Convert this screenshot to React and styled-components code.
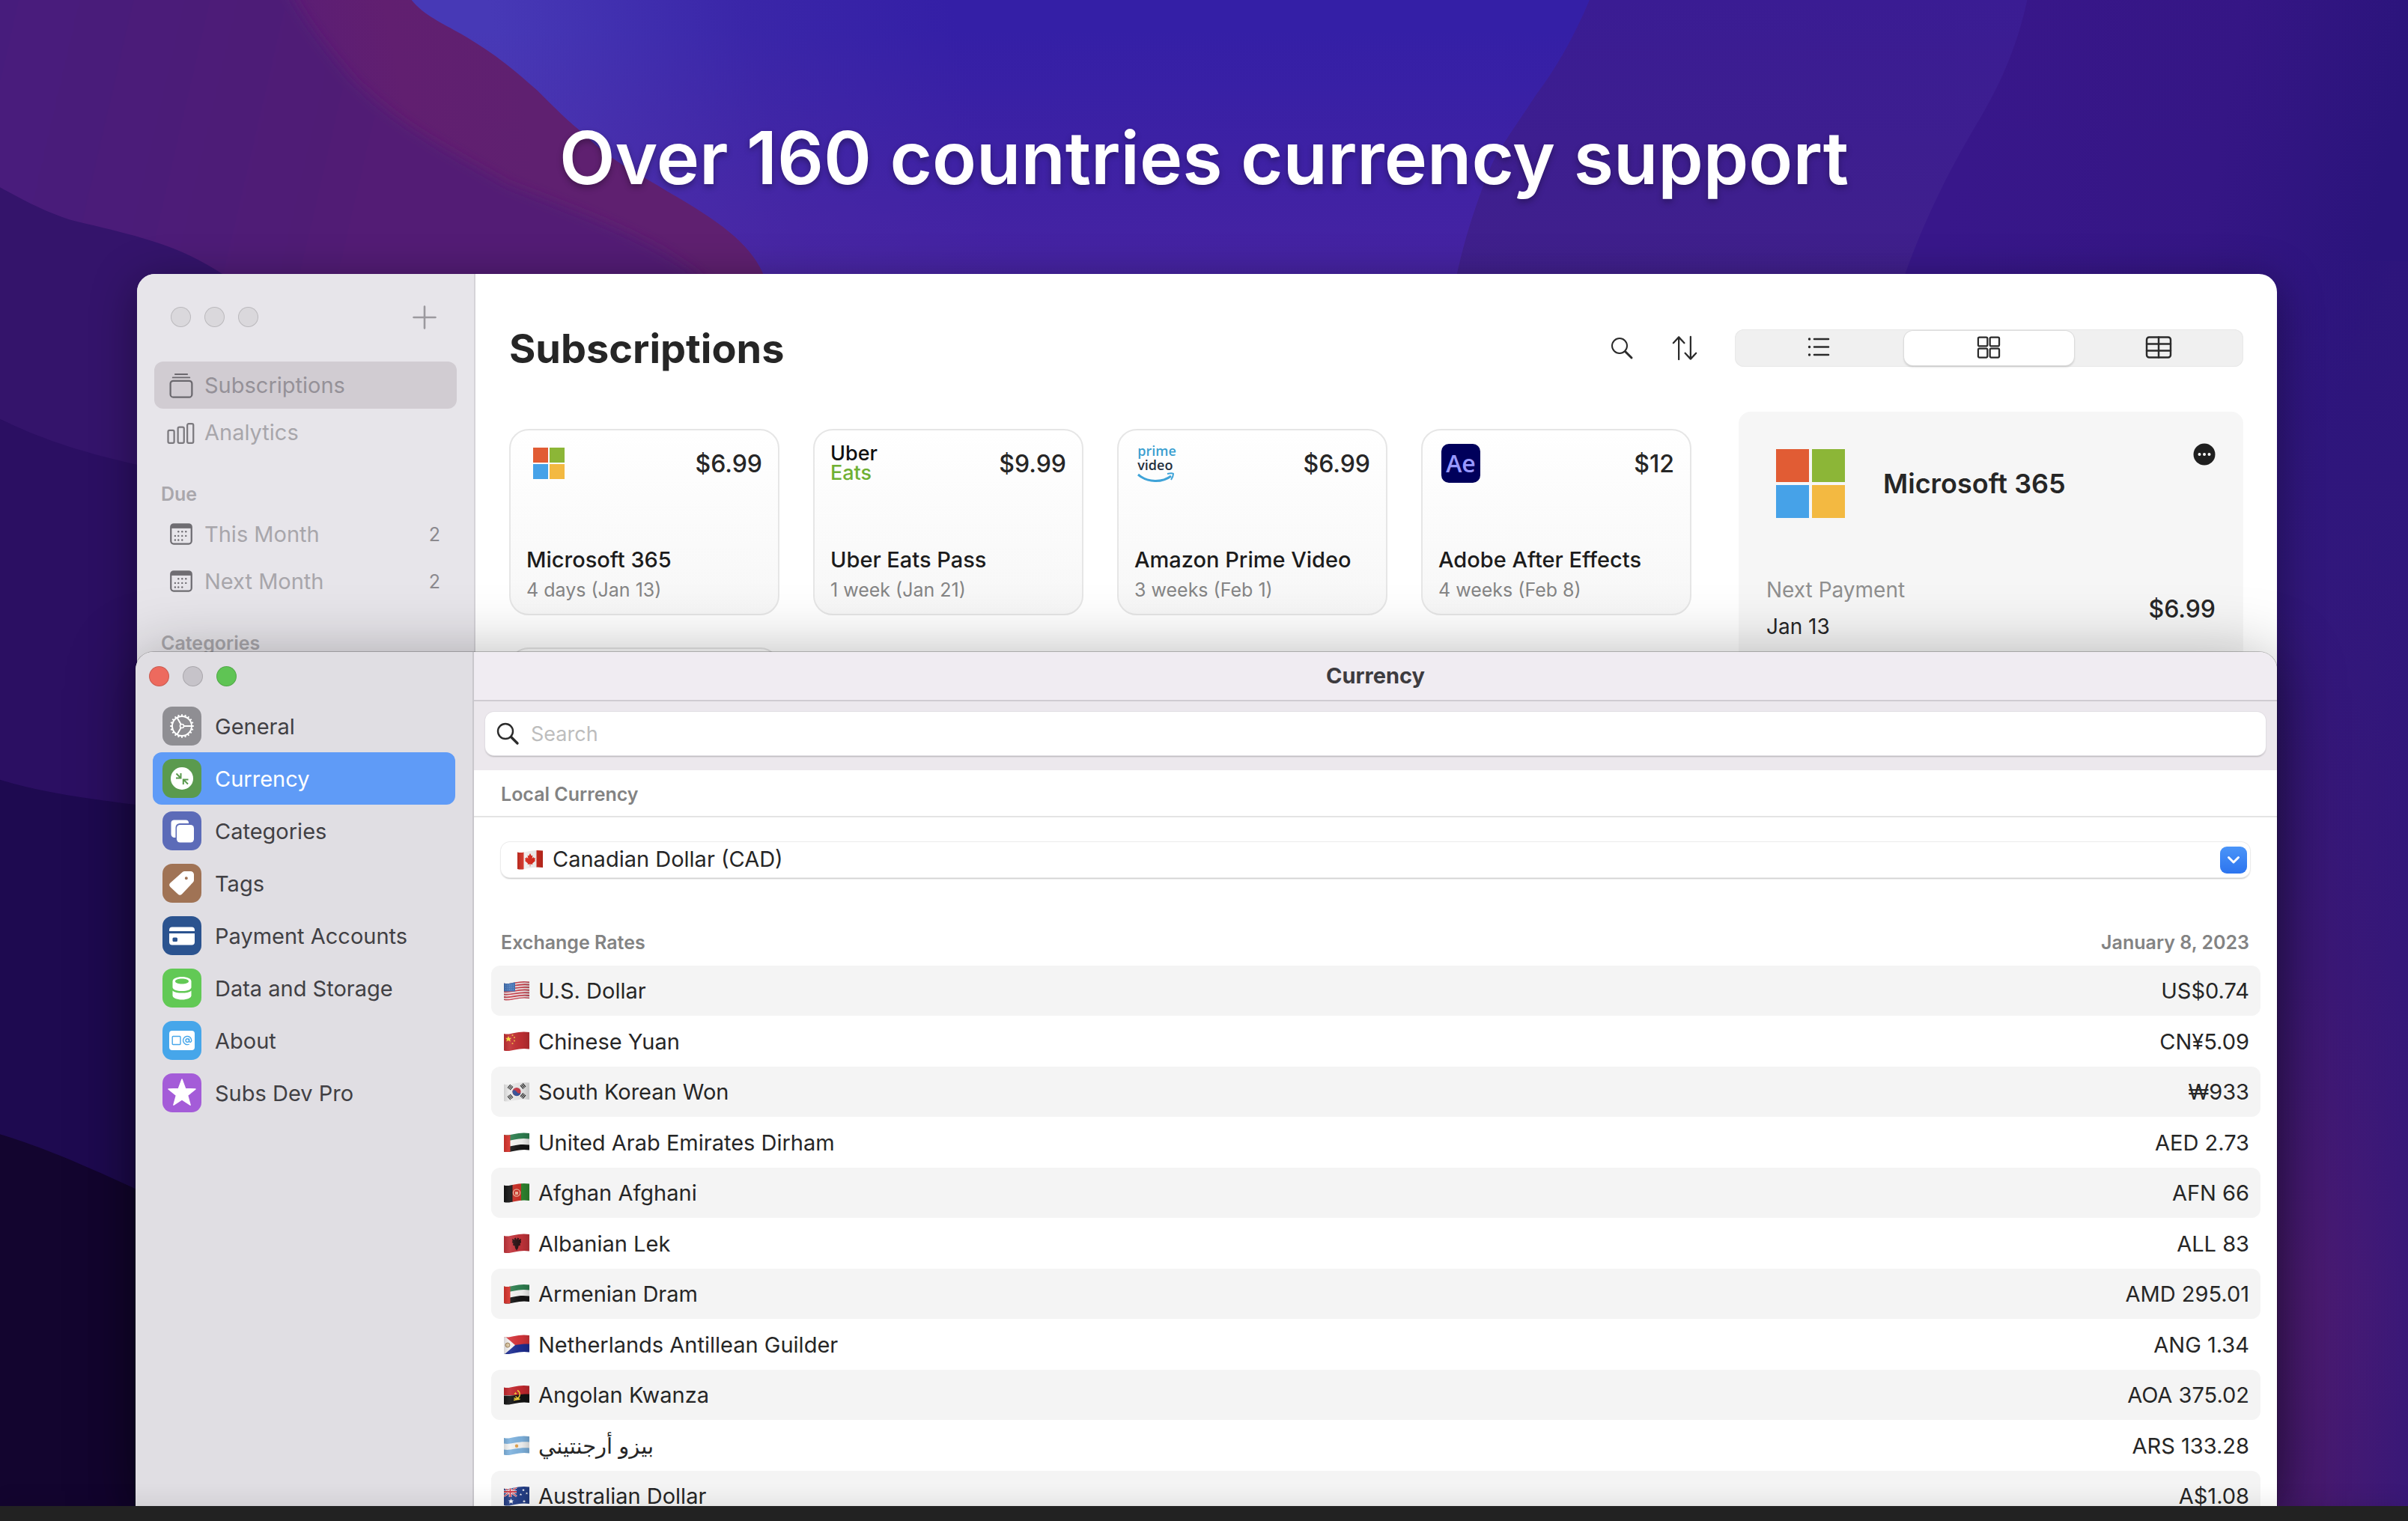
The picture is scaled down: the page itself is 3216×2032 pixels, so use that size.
import React from "react";
import styled, { createGlobalStyle, css } from "styled-components";

const GlobalStyle = createGlobalStyle`
  *, *::before, *::after { box-sizing: border-box; }
  html, body { margin: 0; height: 100%; }
  body {
    font-family: Inter, "DejaVu Sans", "Liberation Sans", sans-serif;
    font-size: 29px;
    color: #262626;
    background: #1c0850;
  }
  #root { height: 100%; }
  h1, h2, h3, p, ul { margin: 0; padding: 0; font-weight: inherit; font-size: inherit; }
  ul { list-style: none; }
  button, input, select { font: inherit; color: inherit; }
  svg { display: block; flex: none; }
`;

/* ---------- page ---------- */

const Page = styled.div`
  position: relative;
  isolation: isolate;
  height: 100vh;
  min-height: 1200px;
  overflow: hidden;
  display: grid;
  grid-template-rows: 366px minmax(0, 1fr) 20px;
`;

const Wallpaper = styled.svg`
  position: absolute;
  inset: 0;
  z-index: -1;
  width: 100%;
  height: 100%;
`;

const Headline = styled.h1`
  padding-top: 147px;
  line-height: 128px;
  font-size: 97px;
  font-weight: 600;
  text-align: center;
  color: #fff;
  text-shadow: 0 4px 8px rgba(0, 0, 0, 0.3);
`;

const Desktop = styled.main`
  display: grid;
  grid-template: minmax(0, 1fr) / minmax(0, 1fr);
  padding: 0 175px 0 181px;
`;

const Ledge = styled.footer`
  position: relative;
  background: #222;
  box-shadow: 0 -2px 32px rgba(0, 0, 0, 0.12);
`;

const windowFrame = css`
  grid-area: 1 / 1;
  display: grid;
  grid-template-columns: 452px minmax(0, 1fr);
  overflow: hidden;
  border-radius: 24px 24px 0 0;
`;

const BackWindow = styled.section`
  ${windowFrame}
  margin-left: 2px;
  background: #fff;
  box-shadow: 0 12px 60px rgba(0, 0, 0, 0.4);
`;

const FrontWindow = styled.section`
  ${windowFrame}
  margin-top: 505px;
  position: relative;
  background: #fff;
  box-shadow: 0 0 0 1px rgba(0, 0, 0, 0.22), 0 10px 90px rgba(0, 0, 0, 0.34);
`;

const Sidebar = styled.aside`
  background: ${(p) => (p.$dim ? "#e7e5ea" : "#e0dee3")};
  border-right: 2px solid ${(p) => (p.$dim ? "#d5d3d8" : "#c9c7cc")};
  padding: 0 23px;
`;

const SidebarTop = styled.div`
  display: flex;
  align-items: center;
  justify-content: space-between;
  height: ${(p) => (p.$tall ? "117px" : "64px")};
  padding: ${(p) => (p.$tall ? "0 27px 2px 22px" : "0")};
  margin-left: ${(p) => (p.$tall ? "0" : "-5px")};
`;

const Lights = styled.div`
  display: flex;
  gap: 18px;
`;

const Light = styled.button`
  width: 27px;
  height: 27px;
  padding: 0;
  border-radius: 50%;
  border: 1px solid rgba(0, 0, 0, 0.14);
  background: ${(p) => p.$color};
`;

const BareButton = styled.button`
  display: grid;
  place-items: center;
  padding: 0;
  border: 0;
  background: none;
`;

/* ---------- back window ---------- */

const NavItem = styled.a`
  display: flex;
  align-items: center;
  gap: 11px;
  height: 63px;
  padding: 0 22px 0 16px;
  border-radius: 12px;
  text-decoration: none;
  color: ${(p) => (p.$on ? "#959198" : "#a8a6ab")};
  background: ${(p) => (p.$on ? "#d1ccd2" : "transparent")};
`;

const NavLabel = styled.span`
  flex: 1;
`;

const NavCount = styled.span`
  font-size: 25px;
  color: #8b898e;
`;

const NavHeading = styled.h2`
  padding: 30px 9px 0;
  line-height: 43px;
  font-size: 25px;
  font-weight: 600;
  color: #a9a7ac;
`;

const Library = styled.div`
  padding: 64px 45px 0;
`;

const LibraryBar = styled.header`
  display: flex;
  align-items: center;
  height: 70px;
`;

const LibraryTitle = styled.h2`
  flex: 1;
  font-size: 54px;
  font-weight: 700;
`;

const Tools = styled.div`
  display: flex;
  gap: 50px;
  margin-right: 49px;
`;

const Segments = styled.div`
  display: grid;
  grid-template-columns: repeat(3, 1fr);
  width: 679px;
  height: 50px;
  padding: 2px 0;
  border-radius: 12px;
  background: #f0f0f0;
  box-shadow: inset 0 0 0 1px #e8e8e8;
`;

const Segment = styled.button`
  display: grid;
  place-items: center;
  padding: 0 0 2px;
  border: 0;
  border-radius: 12px;
  background: ${(p) => (p.$on ? "#fff" : "transparent")};
  box-shadow: ${(p) => (p.$on ? "0 0 0 1px #dcdcdc, 0 2px 3px rgba(0,0,0,.2)" : "none")};
`;

const LibraryBody = styled.div`
  display: grid;
  grid-template-columns: minmax(0, 1fr) 674px;
  gap: 63px;
  margin-top: 50px;
`;

const Cards = styled.ul`
  display: grid;
  grid-template-columns: repeat(4, minmax(0, 1fr));
  grid-auto-rows: 249px;
  gap: 43px 45px;
  padding-top: 23px;
`;

const Card = styled.li`
  display: flex;
  flex-direction: column;
  justify-content: space-between;
  padding: 13px 21px;
  border: 2px solid #e6e6e6;
  border-radius: 26px;
  background: linear-gradient(#fff, #f7f7f7);
`;

const CardTop = styled.div`
  display: flex;
  align-items: center;
  justify-content: space-between;
`;

const LogoSlot = styled.div`
  display: grid;
  place-items: center;
  width: 60px;
  height: 62px;
`;

const Price = styled.span`
  font-size: 32px;
  font-weight: 500;
`;

const CardName = styled.h3`
  line-height: 42px;
  font-weight: 500;
  color: #1c1c1c;
`;

const CardDue = styled.p`
  line-height: 38px;
  font-size: 25px;
  color: #858585;
`;

const Stack = styled.div`
  display: grid;
  justify-items: start;
  line-height: ${(p) => p.$line};
  font-size: ${(p) => p.$size};
  font-family: ${(p) => p.$face};
`;

const Tint = styled.span`
  color: ${(p) => p.$color};
  font-weight: ${(p) => p.$weight};
`;

const AeTile = styled.span`
  display: grid;
  place-items: center;
  width: 52px;
  height: 52px;
  border-radius: 10px;
  background: #00005b;
  color: #9999ff;
  font-family: "Open Sans", Inter, sans-serif;
  font-size: 32px;
  line-height: 40px;
  font-weight: 600;
`;

const Detail = styled.article`
  height: 480px;
  padding: 42px 37px;
  border-radius: 16px;
  background: #f6f6f6;
`;

const DetailTop = styled.header`
  display: flex;
  align-items: center;
  gap: 51px;
  height: 107px;
  padding-left: 13px;
`;

const DetailName = styled.h3`
  flex: 1;
  font-size: 36px;
  font-weight: 600;
`;

const MoreButton = styled(BareButton)`
  align-self: flex-start;
`;

const Payment = styled.div`
  display: flex;
  align-items: center;
  justify-content: space-between;
  margin-top: 65px;
`;

const PaymentTerm = styled.p`
  line-height: 49px;
  font-size: 28px;
  color: ${(p) => (p.$muted ? "#8f8f8f" : "#262626")};
`;

/* ---------- front window ---------- */

const Pane = styled.a`
  display: flex;
  align-items: center;
  gap: 18px;
  height: 70px;
  padding-left: 13px;
  border-radius: 12px;
  text-decoration: none;
  color: ${(p) => (p.$on ? "#fff" : "#414044")};
  background: ${(p) => (p.$on ? "#5f9bf7" : "transparent")};
`;

const Tile = styled.span`
  display: grid;
  place-items: center;
  width: 52px;
  height: 52px;
  border-radius: 13px;
  background: ${(p) => p.$color};
`;

const TitleBar = styled.header`
  height: 66px;
  line-height: 63px;
  border-bottom: 2px solid #cfcbd1;
  background: #f0ecf2;
  text-align: center;
  font-weight: 700;
  color: #3d3b3f;
`;

const SearchArea = styled.div`
  padding: 14px 15px 20px;
  background: #ece8ed;
`;

const SearchField = styled.label`
  display: flex;
  align-items: center;
  gap: 15px;
  height: 58px;
  padding: 0 14px;
  border-radius: 12px;
  background: #fff;
  box-shadow: 0 0 0 1px #e2dfe4, 0 2px 2px rgba(0, 0, 0, 0.24);
`;

const SearchInput = styled.input`
  flex: 1;
  min-width: 0;
  padding: 0;
  border: 0;
  outline: 0;
  background: none;
  font-size: 27px;
  &::placeholder { color: #bdbdbd; opacity: 1; }
`;

const SheetHeading = styled.h2`
  height: 63px;
  padding: 2px 36px 0;
  line-height: 60px;
  border-bottom: 2px solid #e4e4e4;
  font-size: 25px;
  font-weight: 600;
  color: #838383;
`;

const PickerRow = styled.div`
  padding: 33px 36px 0;
`;

const Picker = styled.label`
  display: flex;
  align-items: center;
  gap: 13px;
  height: 47px;
  padding: 0 4px 0 22px;
  border-radius: 12px;
  background: #fff;
  box-shadow: 0 0 0 1px #ececec, 0 2px 2px rgba(0, 0, 0, 0.24);
`;

const PickerSelect = styled.select`
  flex: 1;
  min-width: 0;
  height: 47px;
  padding: 0 0 2px;
  border: 0;
  outline: 0;
  appearance: none;
  background: none;
`;

const PickerBadge = styled.span`
  display: grid;
  place-items: center;
  width: 36px;
  height: 36px;
  border-radius: 9px;
  background: linear-gradient(#4a94f8, #2c74ef);
`;

const RatesHeading = styled.div`
  display: flex;
  justify-content: space-between;
  padding: 56px 37px 0 36px;
  line-height: 62px;
  font-size: 25px;
  font-weight: 600;
  color: #838383;
`;

const RatesWrap = styled.div`
  padding: 0 22px 0 23px;
`;

const Rates = styled.table`
  width: 100%;
  border-collapse: separate;
  border-spacing: 0;
`;

const RateRow = styled.tr`
  height: 68px;
  &:nth-child(odd) { height: 67px; }
  &:nth-child(odd) > * { background: #f4f4f4; }
  & > :first-child { border-radius: 12px 0 0 12px; }
  & > :last-child { border-radius: 0 12px 12px 0; }
`;

const RateName = styled.th`
  padding: 0 17px;
  font-weight: 400;
  text-align: left;
`;

const RateLabel = styled.span`
  display: flex;
  align-items: center;
  gap: 12px;
`;

const RateValue = styled.td`
  padding: 0 15px;
  text-align: right;
`;

/* ---------- icons ---------- */

const Line = ({ size = 32, w = 2, color = "#2b2b2b", children }) => (
  <svg width={size} height={size} viewBox="0 0 32 32" fill="none" stroke={color} strokeWidth={w} strokeLinecap="round" strokeLinejoin="round" aria-hidden="true">
    {children}
  </svg>
);

const SearchIcon = ({ w = 2 }) => (
  <Line w={w}><circle cx="13" cy="13" r="10" /><path d="M20.500 20.500 29 29" strokeWidth={w + 1} /></Line>
);
const SortIcon = () => (
  <Line size={36} w={2}><path d="M9 29.500V3M2.500 10 9 3l6.500 7M23 2.500V29M16.500 22l6.500 7 6.500-7" /></Line>
);
const ListIcon = () => (
  <Line w={2.6}><path d="M9 5h19M9 15.500h19M9 26h19" /><path d="M2.500 5h.1M2.500 15.500h.1M2.500 26h.1" strokeWidth="3.400" /></Line>
);
const GridIcon = () => (
  <Line size={36} w={2}>
    {[[3.500, 4], [17.500, 4], [3.500, 17.500], [17.500, 17.500]].map(([x, y]) => (
      <rect key={x + "-" + y} x={x} y={y} width="11" height="10.500" rx="1.500" />
    ))}
  </Line>
);
const TableIcon = () => (
  <Line size={36} w={2.2}><rect x="1.800" y="4" width="28.400" height="24" rx="3" /><path d="M1.800 12h28.400M1.800 20h28.400M16 4v24" /></Line>
);
const PlusIcon = () => <Line w={2.6} color="#9b999e"><path d="M1.500 16h29M16 1.500v29" /></Line>;
const MoreIcon = () => (
  <svg width="30" height="30" viewBox="0 0 30 30" aria-hidden="true">
    <circle cx="15" cy="15" r="14.500" fill="#1f1f1f" />
    {[8.500, 15, 21.500].map((x) => <circle key={x} cx={x} cy="15" r="2" fill="#fff" />)}
  </svg>
);
const SubsIcon = () => (
  <Line size={40} w={1.800} color="#6b686e"><path d="M9.500 4h13M7 7.500h18" strokeWidth="1.500" /><rect x="4.500" y="11" width="23" height="17.500" rx="3" /></Line>
);
const BarsIcon = () => (
  <Line size={40} w={1.800} color="#7b797e"><rect x="2" y="13.500" width="6.500" height="13.500" rx="1.500" /><rect x="12.500" y="10" width="6.500" height="17" rx="1.500" /><rect x="22.500" y="6.500" width="6.500" height="20.500" rx="1.500" /></Line>
);
const CalIcon = () => (
  <Line size={40} w={1.800} color="#6f6d72">
    <rect x="5" y="5" width="22" height="21" rx="3" />
    <path d="M5.500 7.500h21" strokeWidth="4" strokeLinecap="butt" />
    {[[13, 13], [17, 13], [21, 13], [9.500, 17.500], [13, 17.500], [17, 17.500], [21, 17.500], [9.500, 22], [13, 22], [17, 22]].map(([x, y]) => (
      <path key={x + "," + y} d={`M${x} ${y}h.01`} strokeWidth="1.900" />
    ))}
  </Line>
);

const Squares = ({ size, gap }) => {
  const s = (size - gap) / 2;
  const o = s + gap;
  return (
    <svg width={size} height={size} viewBox={`0 0 ${size} ${size}`} aria-hidden="true">
      <rect width={s} height={s} fill="#e15c34" />
      <rect x={o} width={s} height={s} fill="#8cb637" />
      <rect y={o} width={s} height={s} fill="#46a2e8" />
      <rect x={o} y={o} width={s} height={s} fill="#f3b941" />
    </svg>
  );
};

const logos = {
  ms: <Squares size={42} gap={2} />,
  uber: (
    <Stack $size="27px" $line="26px" $face="Inter, sans-serif">
      <Tint $color="#111" $weight={500}>Uber</Tint>
      <Tint $color="#6fb033" $weight={500}>Eats</Tint>
    </Stack>
  ),
  prime: (
    <Stack $size="18px" $line="19px" $face='"Open Sans", Inter, sans-serif'>
      <Tint $color="#3a9fd0" $weight={600}>prime</Tint>
      <Tint $color="#232f3e" $weight={600}>video</Tint>
      <svg width="50" height="14" viewBox="0 0 50 14" fill="none" stroke="#3fa3d8" aria-hidden="true">
        <path d="M1 3c13 11 32 11 44 2" strokeWidth="3" />
        <path d="M40 2c4-1 8-1 8 0s-1 5-3 8" strokeWidth="2" />
      </svg>
    </Stack>
  ),
  ae: <AeTile>Ae</AeTile>,
};

const Glyph = ({ children }) => (
  <svg width="40" height="40" viewBox="0 0 40 40" fill="#fff" aria-hidden="true">{children}</svg>
);
const teeth = Array.from({ length: 20 }, (_, i) => i * 18);
const glyphs = {
  gear: (
    <Glyph>
      <g fill="none" stroke="#fff" strokeWidth="2">
        <circle cx="20" cy="20" r="13" />
        <circle cx="20" cy="20" r="2.500" strokeWidth="1.600" />
        <path d="M22.500 20H33M18.700 17.800 13.500 8.700M18.700 22.200 13.500 31.300" />
        {teeth.map((a) => <path key={a} d="M20 4.200v3" transform={`rotate(${a} 20 20)`} />)}
      </g>
    </Glyph>
  ),
  currency: (
    <Glyph>
      <circle cx="20" cy="20" r="15" />
      <path d="M12.500 13.500l5.500 5.500M18.500 13v6.500H12M28 27.500l-5.500-5.500M21.800 28v-6.500h6.700" fill="none" stroke="#5a9a4e" strokeWidth="2" />
    </Glyph>
  ),
  cats: (
    <Glyph>
      <path d="M9 5.500h16a4 4 0 0 1 4 4v.5H17a5.500 5.500 0 0 0-5.500 5.500V29H10a4.500 4.500 0 0 1-4.500-4.500V9.500a4 4 0 0 1 3.500-4z" />
      <rect x="13" y="12" width="23" height="23.500" rx="4.500" />
    </Glyph>
  ),
  tag: (
    <Glyph>
      <path fillRule="evenodd" d="M24 4h7.500A4.500 4.500 0 0 1 36 8.500V16a4 4 0 0 1-1.200 2.800L20 34.500a4 4 0 0 1-5.400 0L4.500 25a3.800 3.800 0 0 1 0-5.400L20.500 5.200A5 5 0 0 1 24 4zm1.800 7.200a2 2 0 1 0 0 4 2 2 0 0 0 0-4z" />
    </Glyph>
  ),
  card: (
    <Glyph>
      <path d="M3 12.500A4 4 0 0 1 7 8.500h26a4 4 0 0 1 4 4v1.500H3z" />
      <path fillRule="evenodd" d="M3 17h34v11.500a4 4 0 0 1-4 4H7a4 4 0 0 1-4-4zm6 5.500a1.500 1.500 0 0 0-1.500 1.500v2.500A1.500 1.500 0 0 0 9 28h3.500a1.500 1.500 0 0 0 1.500-1.500V24a1.500 1.500 0 0 0-1.500-1.500z" />
    </Glyph>
  ),
  data: (
    <Glyph>
      <path fillRule="evenodd" d="M20 5c7 0 12.500 2.500 12.500 6v8c0 3-5.500 5-12.500 5s-12.500-2-12.500-5v-8C7.500 7.500 13 5 20 5zm0 2.500c-5 0-9 1.500-9 3.500s4 3.500 9 3.500 9-1.500 9-3.500-4-3.500-9-3.500z" />
      <path d="M7.500 23.500C10 26 15 26.600 20 26.600s10-.6 12.500-3.100V30c0 3-5.500 5.500-12.500 5.500S7.500 33 7.500 30z" />
    </Glyph>
  ),
  about: (
    <Glyph>
      <rect x="3" y="7" width="34" height="26" rx="4" />
      <g fill="none" stroke="#46a6ea" strokeWidth="1.400">
        <rect x="7.200" y="14.500" width="10.800" height="11" rx="1" />
        <circle cx="27.300" cy="20" r="2.300" />
        <path d="M29.600 17.600v3.200c0 2.200 3.200 2 3.200-.8a5.600 5.600 0 1 0-3 5" />
      </g>
    </Glyph>
  ),
  star: (
    <Glyph>
      <path stroke="#fff" strokeWidth="1.500" strokeLinejoin="round" d="M20 2l4.600 12.400 13.400.6-10.500 8.300 3.600 12.900L20 28.800 8.900 36.200l3.600-12.900L2 15l13.400-.6z" />
    </Glyph>
  ),
};

/* ---------- flags ---------- */

const FlagCloth = styled.svg`
  clip-path: path("M0 3.500C9 6 17 -1 34 1.500V24C18 21.500 10 28.500 0 26Z");
`;

const star = (x, y, r, fill = "#fff") => (
  <path key={x + "_" + y} fill={fill} d={`M${x} ${y - r}l${r * 0.3} ${r * 0.7} ${r * 0.7} 0 ${-r * 0.5} ${r * 0.5} ${r * 0.2} ${r * 0.7} ${-r * 0.7} ${-r * 0.4} ${-r * 0.7} ${r * 0.4} ${r * 0.2} ${-r * 0.7} ${-r * 0.5} ${-r * 0.5} ${r * 0.7} 0z`} />
);
const gua = (x, y, a) => (
  <path key={x + "_" + y} d="M-3-2h6M-3 0h6M-3 2h6" stroke="#333" strokeWidth="1.300" transform={`translate(${x} ${y}) rotate(${a})`} />
);

const uae = (
  <>
    <path fill="#2f8051" d="M0 0h34v10C17 7 9 13 0 11z" />
    <path fill="#f4f4f2" d="M0 10.500C9 13 17 6 34 8.500v9C17 14 9 20 0 18z" />
    <path fill="#151515" d="M0 18.500C9 20 17 14 34 16.500V27H0z" />
    <path fill="#d8322b" d="M0 0h8.500v27H0z" />
  </>
);

const flags = {
  ca: (
    <>
      <path fill="#f3f1f0" d="M0 0h34v27H0z" /><path fill="#cf2c20" d="M0 0h8.500v27H0zM25.500 0H34v27h-8.500z" />
      <path fill="#d9291c" d="M17 5l1.800 3.500 1.600-.8-.8 4.300 2-2 .5 1.500 1.900-.3-.8 3 .8.8-4 3.500.4 1.300-3.100-.4V22.500h-.6v-3.100l-3.100.4.4-1.300-4-3.500.8-.8-.8-3 1.900.3.5-1.500 2 2-.8-4.300 1.600.8z" />
    </>
  ),
  us: (
    <>
      <path fill="#f2e9ea" d="M0 0h34v27H0z" />
      <path stroke="#c94450" strokeWidth="1.800" fill="none" d={[3, 6.600, 10.200, 13.800, 17.400, 21, 24.600].map((y) => `M0 ${y + 1}C9 ${y + 3} 17 ${y - 3} 34 ${y - 1}`).join("")} />
      <path fill="#3f70b4" d="M0 0h15v14.500H0z" />
      <path d="M2 6h12M2 9h12M2 12h12" stroke="#7d9fd0" strokeWidth="1" strokeDasharray="1 1.500" />
    </>
  ),
  cn: (
    <>
      <path fill="#c22f33" d="M0 0h34v27H0z" />
      {star(6, 10, 4, "#fbdc3c")}
      {[[11.500, 5], [14, 8], [14, 12.500], [11.500, 16]].map(([x, y]) => <circle key={y} cx={x} cy={y} r="1" fill="#f3b93b" />)}
    </>
  ),
  kr: (
    <>
      <path fill="#ebebeb" d="M0 0h34v27H0z" />
      <circle cx="17" cy="13.500" r="5.600" fill="#c53b48" />
      <path fill="#34529a" d="M11.500 12.300a5.600 5.600 0 1 0 11.100 2.400c-1.500 1.600-4 1.300-5.600-1.200s-4.100-2.900-5.500-1.200z" />
      {gua(8.500, 7.500, -50)}{gua(25.500, 6, 50)}{gua(8.500, 20.500, 50)}{gua(25.500, 19, -50)}
    </>
  ),
  ae: uae,
  af: (
    <>
      <path fill="#141414" d="M0 0h12v27H0z" /><path fill="#cb2f25" d="M11.500 0h12v27h-12z" /><path fill="#2f8630" d="M23 0h11v27H23z" />
      <circle cx="17" cy="13.500" r="4.600" fill="none" stroke="#efb49a" strokeWidth="1.300" /><path d="M15 16v-4h4v4z" fill="#efb49a" />
    </>
  ),
  al: (
    <>
      <path fill="#c2333a" d="M0 0h34v27H0z" />
      <path fill="#2b1214" d="M17 8.500l1.200-3 2.200 1-1.300 2 3.900-1.500-.5 2.500.5 2.500-1.500 1 .5 2.500-2.500 1-.5 3-2 3-2-3-.5-3-2.500-1 .5-2.500-1.500-1 .5-2.500-.5-2.500 3.900 1.500-1.300-2 2.200-1z" />
    </>
  ),
  sx: (
    <>
      <path fill="#d5343a" d="M0 0h34v14H0z" /><path fill="#1d2d92" d="M0 14.500C17 15 20 12 34 12.500V27H0z" /><path fill="#f4f2f2" d="M0 1l15 13L0 27z" />
      <circle cx="5" cy="14" r="3" fill="#dcc9a4" stroke="#9b7c56" />
    </>
  ),
  ao: (
    <>
      <path fill="#c3282e" d="M0 0h34v14H0z" /><path fill="#131313" d="M0 14.500C17 15 20 12 34 12.500V27H0z" />
      <path d="M18 7.500c4 2 4.500 8 .5 10.500-2 1-4 .5-5-.5M13 20.500l8.500-1.500M15.500 15.500l5 4.500" fill="none" stroke="#f2cf35" strokeWidth="1.400" />
      {star(15.500, 11.500, 2, "#f2cf35")}
    </>
  ),
  ar: (
    <>
      <path fill="#7fb3df" d="M0 0h34v27H0z" /><path fill="#f3f4f4" d="M0 10.500C9 12.500 17 7 34 8.500v8C18 15 9 20.500 0 18.500z" /><circle cx="17" cy="13.800" r="2.200" fill="#e2a24d" />
    </>
  ),
  au: (
    <>
      <path fill="#26418c" d="M0 0h34v27H0z" />
      <path d="M0 2l17 12M17 2L0 14" stroke="#fff" strokeWidth="2.400" /><path d="M0 2l17 12M17 2L0 14" stroke="#d03443" strokeWidth="1.100" />
      <path d="M8.500 1v14M0 8h17" stroke="#fff" strokeWidth="3.600" /><path d="M8.500 1v14M0 8h17" stroke="#d03443" strokeWidth="2" />
      {star(9.500, 20.500, 3.500)}{star(26, 5.500, 1.800)}{star(30.500, 10, 1.600)}{star(22.500, 11.500, 1.600)}{star(27, 20.500, 2)}
    </>
  ),
};

const Flag = ({ code }) => (
  <FlagCloth width="34" height="27" viewBox="0 0 34 27" aria-hidden="true">
    {flags[code]}
    <path fill="url(#cloth)" d="M0 0h34v27H0z" />
  </FlagCloth>
);

/* ---------- data ---------- */

const subscriptions = [
  { logo: "ms", price: "$6.99", name: "Microsoft 365", due: "4 days (Jan 13)" },
  { logo: "uber", price: "$9.99", name: "Uber Eats Pass", due: "1 week (Jan 21)" },
  { logo: "prime", price: "$6.99", name: "Amazon Prime Video", due: "3 weeks (Feb 1)" },
  { logo: "ae", price: "$12", name: "Adobe After Effects", due: "4 weeks (Feb 8)" },
];

const panes = [
  { label: "General", glyph: "gear", color: "#8f8e93" },
  { label: "Currency", glyph: "currency", color: "#5a9a4e", on: true },
  { label: "Categories", glyph: "cats", color: "#5c6bb8" },
  { label: "Tags", glyph: "tag", color: "#a07355" },
  { label: "Payment Accounts", glyph: "card", color: "#2b538f" },
  { label: "Data and Storage", glyph: "data", color: "#62c955" },
  { label: "About", glyph: "about", color: "#46a6ea" },
  { label: "Subs Dev Pro", glyph: "star", color: "#a45cd8" },
];

const rates = [
  ["us", "U.S. Dollar", "US$0.74"],
  ["cn", "Chinese Yuan", "CN¥5.09"],
  ["kr", "South Korean Won", "₩933"],
  ["ae", "United Arab Emirates Dirham", "AED 2.73"],
  ["af", "Afghan Afghani", "AFN 66"],
  ["al", "Albanian Lek", "ALL 83"],
  ["ae", "Armenian Dram", "AMD 295.01"],
  ["sx", "Netherlands Antillean Guilder", "ANG 1.34"],
  ["ao", "Angolan Kwanza", "AOA 375.02"],
  ["ar", "بيزو أرجنتيني", "ARS 133.28"],
  ["au", "Australian Dollar", "A$1.08"],
];

/* ---------- views ---------- */

const Backdrop = () => (
  <Wallpaper viewBox="0 0 1568 991" preserveAspectRatio="none" aria-hidden="true">
    <defs>
      <linearGradient id="cloth" x1="0" x2="1" y1="0" y2="0">
        <stop offset="0" stopColor="#000" stopOpacity=".12" /><stop offset=".25" stopColor="#fff" stopOpacity=".08" />
        <stop offset=".7" stopColor="#000" stopOpacity=".04" /><stop offset="1" stopColor="#000" stopOpacity=".16" />
      </linearGradient>
      <linearGradient id="blue" gradientUnits="userSpaceOnUse" x1="330" y1="60" x2="620" y2="0">
        <stop offset="0" stopColor="#4739b6" /><stop offset=".55" stopColor="#3a26a8" /><stop offset="1" stopColor="#341fa6" />
      </linearGradient>
      <linearGradient id="glow" x1="0" y1="0" x2="0" y2="1">
        <stop offset="0" stopColor="#5226a0" stopOpacity="0" /><stop offset="1" stopColor="#5226a0" stopOpacity=".7" />
      </linearGradient>
      <linearGradient id="midA" gradientUnits="userSpaceOnUse" x1="0" y1="0" x2="0" y2="180">
        <stop offset="0" stopColor="#3a1c93" /><stop offset="1" stopColor="#40208c" />
      </linearGradient>
      <linearGradient id="midB" gradientUnits="userSpaceOnUse" x1="1280" y1="80" x2="1550" y2="130">
        <stop offset="0" stopColor="#38178a" /><stop offset=".6" stopColor="#351685" /><stop offset="1" stopColor="#2b147c" />
      </linearGradient>
      <linearGradient id="right" gradientUnits="userSpaceOnUse" x1="0" y1="170" x2="0" y2="991">
        <stop offset="0" stopColor="#31177c" stopOpacity="0" /><stop offset=".25" stopColor="#31177c" />
        <stop offset=".55" stopColor="#3b1876" /><stop offset=".82" stopColor="#4b1b72" /><stop offset="1" stopColor="#471a70" />
      </linearGradient>
      <linearGradient id="edge" gradientUnits="userSpaceOnUse" x1="1510" y1="0" x2="1568" y2="0">
        <stop offset="0" stopColor="#2f167c" stopOpacity="0" /><stop offset="1" stopColor="#2f167c" stopOpacity=".6" />
      </linearGradient>
      <linearGradient id="plum" gradientUnits="userSpaceOnUse" x1="0" y1="0" x2="260" y2="60">
        <stop offset="0" stopColor="#471f7c" /><stop offset="1" stopColor="#521b74" />
      </linearGradient>
      <linearGradient id="wine" gradientUnits="userSpaceOnUse" x1="180" y1="40" x2="330" y2="10">
        <stop offset="0" stopColor="#5a1d76" /><stop offset=".5" stopColor="#611f70" /><stop offset="1" stopColor="#5f2070" />
      </linearGradient>
      <filter id="soft" x="-20%" y="-20%" width="140%" height="140%"><feGaussianBlur stdDeviation="4" /></filter>
    </defs>
    <path fill="url(#blue)" d="M0 0h1568v991H0z" />
    <path fill="url(#glow)" d="M300 20h800v180H300z" />
    <path fill="url(#midA)" d="M1035 0C1025 24 1013 45 1000 62 985 85 976 97 971 108 960 135 953 158 948 182V400h620V0z" />
    <path fill="url(#midB)" d="M1320 0C1314 28 1304 52 1290 76 1272 106 1254 140 1240 180v811h330V0z" />
    <path fill="url(#right)" d="M1470 170h98v821h-98z" />
    <path fill="url(#edge)" d="M1510 170h58v821h-58z" />
    <path fill="url(#wine)" d="M0 0h268c8 10 20 15 32 22 24 14 35 24 50 37 14 14 20 20 30 28 20 20 35 25 55 38 35 20 55 35 63 56V240H0z" />
    <path fill="url(#plum)" filter="url(#soft)" d="M-20-20h202c10 25 25 45 48 72 30 30 60 45 100 68 50 20 110 40 135 70v50H-20z" />
    <path fill="#34146b" d="M0 122c18 10 30 16 45 21 40 10 70 15 102 37V320H0z" />
    <path fill="#2b0f62" d="M0 273c25 12 55 24 120 36v300H0z" />
    <path fill="#1e0a50" d="M0 508c30 9 60 13 120 20v300H0z" />
    <path fill="#13052f" d="M0 739c40 12 80 32 130 55v200H0z" />
  </Wallpaper>
);

const SubscriptionsWindow = () => (
  <BackWindow aria-label="Subscriptions">
    <Sidebar $dim>
      <SidebarTop $tall>
        <Lights>
          {["Close", "Minimize", "Zoom"].map((l) => <Light key={l} aria-label={l} $color="#dad8dc" />)}
        </Lights>
        <BareButton aria-label="Add subscription"><PlusIcon /></BareButton>
      </SidebarTop>
      <nav>
        <NavItem href="#subscriptions" $on><SubsIcon /><NavLabel>Subscriptions</NavLabel></NavItem>
        <NavItem href="#analytics"><BarsIcon /><NavLabel>Analytics</NavLabel></NavItem>
        <NavHeading>Due</NavHeading>
        <NavItem href="#this-month"><CalIcon /><NavLabel>This Month</NavLabel><NavCount>2</NavCount></NavItem>
        <NavItem href="#next-month"><CalIcon /><NavLabel>Next Month</NavLabel><NavCount>2</NavCount></NavItem>
        <NavHeading>Categories</NavHeading>
      </nav>
    </Sidebar>
    <Library>
      <LibraryBar>
        <LibraryTitle>Subscriptions</LibraryTitle>
        <Tools>
          <BareButton aria-label="Search"><SearchIcon /></BareButton>
          <BareButton aria-label="Sort"><SortIcon /></BareButton>
        </Tools>
        <Segments role="group" aria-label="View">
          <Segment aria-label="List"><ListIcon /></Segment>
          <Segment aria-label="Grid" aria-pressed="true" $on><GridIcon /></Segment>
          <Segment aria-label="Table"><TableIcon /></Segment>
        </Segments>
      </LibraryBar>
      <LibraryBody>
        <Cards>
          {subscriptions.map((s) => (
            <Card key={s.name}>
              <CardTop><LogoSlot>{logos[s.logo]}</LogoSlot><Price>{s.price}</Price></CardTop>
              <div>
                <CardName>{s.name}</CardName>
                <CardDue>{s.due}</CardDue>
              </div>
            </Card>
          ))}
          <Card />
        </Cards>
        <Detail>
          <DetailTop>
            <Squares size={92} gap={4} />
            <DetailName>Microsoft 365</DetailName>
            <MoreButton aria-label="More"><MoreIcon /></MoreButton>
          </DetailTop>
          <Payment>
            <div>
              <PaymentTerm $muted>Next Payment</PaymentTerm>
              <PaymentTerm>Jan 13</PaymentTerm>
            </div>
            <Price>$6.99</Price>
          </Payment>
        </Detail>
      </LibraryBody>
    </Library>
  </BackWindow>
);

const CurrencyWindow = () => (
  <FrontWindow aria-label="Currency">
    <Sidebar>
      <SidebarTop>
        <Lights>
          <Light aria-label="Close" $color="#ed6a5e" />
          <Light aria-label="Minimize" $color="#c6c3c9" />
          <Light aria-label="Zoom" $color="#5fc454" />
        </Lights>
      </SidebarTop>
      <nav>
        {panes.map((p) => (
          <Pane key={p.label} href="#" $on={p.on}>
            <Tile $color={p.color}>{glyphs[p.glyph]}</Tile>
            {p.label}
          </Pane>
        ))}
      </nav>
    </Sidebar>
    <div>
      <TitleBar>Currency</TitleBar>
      <SearchArea>
        <SearchField>
          <SearchIcon w={2.4} />
          <SearchInput type="text" placeholder="Search" aria-label="Search" />
        </SearchField>
      </SearchArea>
      <SheetHeading>Local Currency</SheetHeading>
      <PickerRow>
        <Picker>
          <Flag code="ca" />
          <PickerSelect aria-label="Local Currency" defaultValue="CAD">
            <option value="CAD">Canadian Dollar (CAD)</option>
          </PickerSelect>
          <PickerBadge>
            <svg width="18" height="12" viewBox="0 0 18 12" fill="none" stroke="#fff" strokeWidth="3" strokeLinecap="round" strokeLinejoin="round" aria-hidden="true">
              <path d="M2.500 2.500 9 9l6.500-6.500" />
            </svg>
          </PickerBadge>
        </Picker>
      </PickerRow>
      <RatesHeading><h2>Exchange Rates</h2><time dateTime="2023-01-08">January 8, 2023</time></RatesHeading>
      <RatesWrap>
        <Rates aria-label="Exchange Rates">
          <tbody>
            {rates.map(([code, name, value]) => (
              <RateRow key={name}>
                <RateName scope="row"><RateLabel><Flag code={code} /><bdi>{name}</bdi></RateLabel></RateName>
                <RateValue>{value}</RateValue>
              </RateRow>
            ))}
          </tbody>
        </Rates>
      </RatesWrap>
    </div>
  </FrontWindow>
);

export default function App() {
  return (
    <>
      <GlobalStyle />
      <Page>
        <Backdrop />
        <Headline>Over 160 countries currency support</Headline>
        <Desktop>
          <SubscriptionsWindow />
          <CurrencyWindow />
        </Desktop>
        <Ledge />
      </Page>
    </>
  );
}
